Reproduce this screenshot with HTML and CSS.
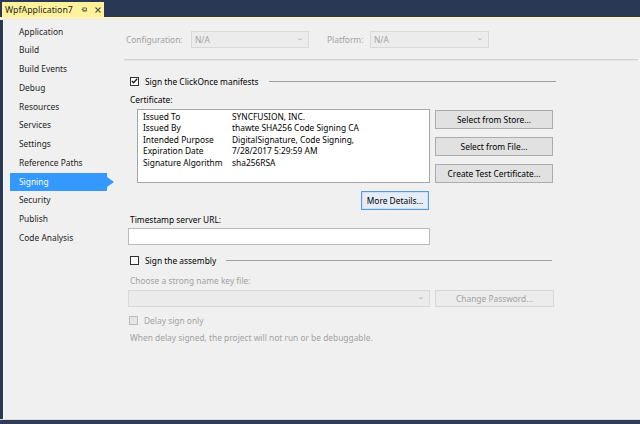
FILE: index.html
```html
<!DOCTYPE html>
<html>
<head>
<meta charset="utf-8">
<link rel="stylesheet" href="styles.css">
</head>
<body>
<div class="window">
  <div class="tabwell">
    <div class="tab">
      <span class="tab-title">WpfApplication7</span>
      <svg class="tab-pin" width="6" height="5" viewBox="0 0 6 5"><path d="M0.5 2.5H2M2 0.5V4.5M2 1H5.5V4H2M2 3.5H5.5" stroke="#6d6a4c" stroke-width="1" fill="none"/></svg>
      <svg class="tab-close" width="6" height="6" viewBox="0 0 6 6"><path d="M0.5 0.5L5.5 5.5M5.5 0.5L0.5 5.5" stroke="#5a5840" stroke-width="1.1"/></svg>
    </div>
  </div>
  <div class="tabline"></div>
  <div class="page">
    <nav class="sidebar">
      <div class="nav-item">Application</div>
      <div class="nav-item">Build</div>
      <div class="nav-item">Build Events</div>
      <div class="nav-item">Debug</div>
      <div class="nav-item">Resources</div>
      <div class="nav-item">Services</div>
      <div class="nav-item">Settings</div>
      <div class="nav-item">Reference Paths</div>
      <div class="nav-item active">Signing</div>
      <div class="nav-item">Security</div>
      <div class="nav-item">Publish</div>
      <div class="nav-item">Code Analysis</div>
    </nav>
    <main class="main">
      <div class="config-row">
        <span class="dim cfg-label">Configuration:</span>
        <div class="combo combo-cfg"><span>N/A</span><span class="chev">&#8964;</span></div>
        <span class="dim plat-label">Platform:</span>
        <div class="combo combo-plat"><span>N/A</span><span class="chev">&#8964;</span></div>
      </div>
      <div class="sep"></div>

      <div class="group-head head-clickonce">
        <span class="check checked"><svg width="7" height="6" viewBox="0 0 7 6"><path d="M0.8 3L2.6 4.8L6.2 0.8" stroke="#1a1a1a" stroke-width="1.3" fill="none"/></svg></span>
        <span class="head-text">Sign the ClickOnce manifests</span>
        <span class="head-line"></span>
      </div>

      <div class="label cert-label">Certificate:</div>
      <div class="cert-row">
        <div class="cert-box">
          <div class="cert-line"><span class="cert-key">Issued To</span><span>SYNCFUSION, INC.</span></div>
          <div class="cert-line"><span class="cert-key">Issued By</span><span>thawte SHA256 Code Signing CA</span></div>
          <div class="cert-line"><span class="cert-key">Intended Purpose</span><span>DigitalSignature, Code Signing,</span></div>
          <div class="cert-line"><span class="cert-key">Expiration Date</span><span>7/28/2017 5:29:59 AM</span></div>
          <div class="cert-line"><span class="cert-key">Signature Algorithm</span><span>sha256RSA</span></div>
        </div>
        <div class="cert-buttons">
          <div class="btn">Select from Store...</div>
          <div class="btn">Select from File...</div>
          <div class="btn">Create Test Certificate...</div>
        </div>
      </div>
      <div class="more-row"><div class="btn btn-focus">More Details...</div></div>

      <div class="label ts-label">Timestamp server URL:</div>
      <div class="textbox"></div>

      <div class="group-head head-assembly">
        <span class="check"></span>
        <span class="head-text">Sign the assembly</span>
        <span class="head-line"></span>
      </div>

      <div class="dim key-label">Choose a strong name key file:</div>
      <div class="key-row">
        <div class="combo combo-key disabled"><span></span><span class="chev">&#8964;</span></div>
        <div class="btn btn-disabled">Change Password...</div>
      </div>

      <div class="delay-row">
        <span class="check check-disabled"></span>
        <span class="dim">Delay sign only</span>
      </div>
      <div class="dim note">When delay signed, the project will not run or be debuggable.</div>
    </main>
  </div>
  <div class="bottomline"></div>
</div>
</body>
</html>
```

FILE: styles.css
```css
* { box-sizing: border-box; }
html, body {
  margin: 0;
  padding: 0;
  background: #293955;
  width: 640px;
  height: 424px;
  overflow: hidden;
}
body {
  font-family: "Noto Sans", "Open Sans", sans-serif;
  font-size: 8.4px;
  color: #000;
}
.window {
  width: 640px;
  height: 424px;
  display: flex;
  flex-direction: column;
}
.tabwell {
  height: 17px;
  padding: 2px 0 0 2px;
  display: flex;
}
.tab {
  width: 102px;
  height: 15px;
  background: #fff29d;
  display: flex;
  align-items: center;
  padding-left: 3px;
  color: #1e1e1e;
}
.tab-title { font-size: 8.8px; }
.tab-pin { margin-left: 8px; }
.tab-close { margin-left: 8px; }
.tabline {
  height: 3px;
  margin-left: 0;
  background: #f3efd6;
  border-top: 1px solid #fbf4c0;
}
.page {
  flex: 1;
  margin-left: 3px;
  background: #f0f0f0;
  border-left: 1px solid #f7f7f7;
  display: flex;
}
.bottomline {
  height: 5px;
  border-top: 1px solid #d8dade;
  background: #2e3c58;
}
.sidebar {
  width: 116px;
  padding-top: 2.5px;
  display: flex;
  flex-direction: column;
}
.nav-item {
  height: 18.75px;
  line-height: 18.75px;
  padding-left: 9px;
  margin-left: 6px;
  width: 97px;
  color: #1e1e1e;
  position: relative;
}
.nav-item.active {
  background: #3399ff;
  color: #fff;
}
.nav-item.active::after {
  content: "";
  position: absolute;
  right: -7px;
  top: 4px;
  border-left: 7px solid #3399ff;
  border-top: 5.4px solid transparent;
  border-bottom: 5.4px solid transparent;
}
.main {
  flex: 1;
  display: flex;
  flex-direction: column;
  align-items: flex-start;
}
.dim { color: #a2a2a2; }
.config-row {
  margin: 11px 0 0 6px;
  height: 17px;
  display: flex;
  align-items: center;
}
.cfg-label { width: 65px; }
.plat-label { width: 43px; margin-left: 18px; }
.combo {
  height: 17px;
  border: 1px solid #d9d9d9;
  background: #ececec;
  color: #a2a2a2;
  display: flex;
  align-items: center;
  justify-content: space-between;
  padding: 0 5px 0 3px;
}
.chev {
  font-size: 7px;
  line-height: 7px;
  color: #b0b0b0;
  transform: scaleX(1.3);
  margin-top: -4px;
}
.combo-cfg { width: 118px; }
.combo-plat { width: 119px; }
.sep {
  margin: 11px 0 0 4px;
  height: 2px;
  width: calc(100% - 6px);
  background: #d3d3d3;
  border-bottom: 1px solid #e6e6e6;
}
.group-head {
  display: flex;
  align-items: center;
  height: 10px;
  margin-left: 10px;
  align-self: stretch;
}
.head-clickonce { margin-top: 15px; }
.head-assembly { margin-top: 10px; }
.check {
  width: 9px;
  height: 9px;
  border: 1px solid #333;
  background: #fff;
  display: flex;
  align-items: center;
  justify-content: center;
  flex: none;
}
.check svg { display: block; }
.check-disabled {
  border-color: #bcbcbc;
  background: #e6e6e6;
}
.head-text {
  margin-left: 6px;
  white-space: nowrap;
}
.head-line {
  height: 1px;
  background: #a0a0a0;
  margin-left: 10px;
}
.head-clickonce .head-line { width: 287px; }
.head-assembly .head-line { width: 326px; }
.label { margin-left: 10px; }
.cert-label { margin-top: 8px; height: 11px; line-height: 11px; }
.cert-row {
  display: flex;
  margin-top: 4px;
  margin-left: 17px;
}
.cert-box {
  width: 293px;
  height: 74px;
  background: #fff;
  border: 1px solid #a6a6a6;
  padding: 1px 0 0 5px;
}
.cert-line {
  height: 11.4px;
  line-height: 11.4px;
  display: flex;
  white-space: nowrap;
}
.cert-key { width: 89px; }
.cert-buttons {
  margin-left: 5px;
  display: flex;
  flex-direction: column;
  gap: 8px;
  padding-top: 1px;
}
.btn {
  height: 19px;
  border: 1px solid #acacac;
  background: #e1e1e1;
  display: flex;
  align-items: center;
  justify-content: center;
  white-space: nowrap;
}
.cert-buttons .btn { width: 118px; }
.more-row {
  margin-top: 8px;
  margin-left: 241px;
}
.btn-focus {
  width: 68px;
  border-color: #5b9bd5;
  background: #e5eef8;
  box-shadow: inset 0 0 0 1px #cfe2f5;
}
.ts-label {
  margin-top: 4px;
  height: 11px;
  line-height: 11px;
}
.textbox {
  margin: 3px 0 0 8px;
  width: 302px;
  height: 17px;
  border: 1px solid #b9b9b9;
  background: #fff;
}
.key-label {
  margin: 10px 0 0 10px;
  height: 11px;
  line-height: 11px;
}
.key-row {
  display: flex;
  margin: 4px 0 0 8px;
  gap: 5px;
}
.combo-key {
  width: 302px;
  background: #ebebeb;
}
.btn-disabled {
  width: 119px;
  height: 17px;
  color: #a2a2a2;
  border-color: #d6d6d6;
  background: #ececec;
}
.delay-row {
  display: flex;
  align-items: center;
  margin: 9px 0 0 9px;
  height: 9px;
}
.delay-row .dim { margin-left: 6px; }
.note {
  margin: 7px 0 0 10px;
  height: 11px;
  line-height: 11px;
}
```
